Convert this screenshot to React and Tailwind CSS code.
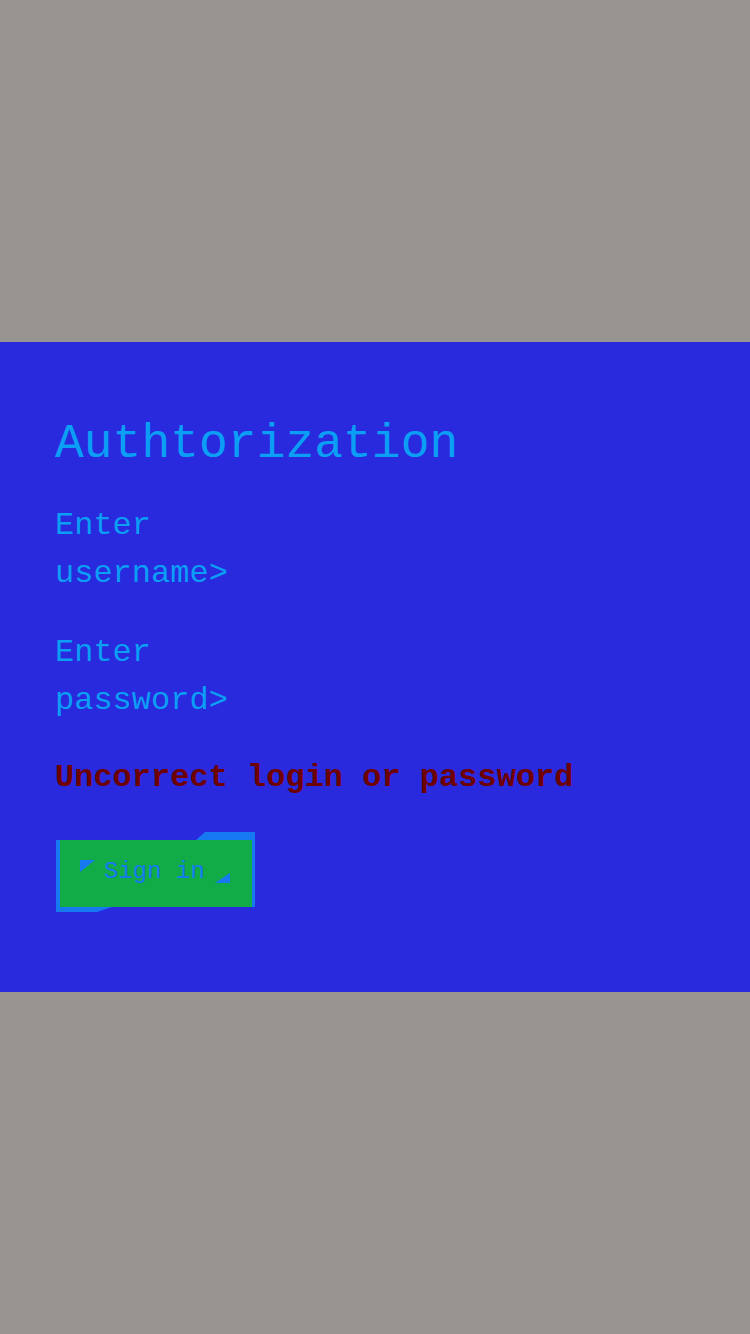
import React from 'react';

const mono = { fontFamily: '"Liberation Mono", "DejaVu Sans Mono", monospace' };

const SignInButton = () => (
  <div role="button" className="relative w-[199px] h-[80px] cursor-pointer">
    <svg className="absolute inset-0" width="199" height="80" viewBox="0 0 199 80">
      <polygon points="140,8 149,0 199,0 199,75 140,75" fill="#1679f2" />
      <polygon points="0,8 4,8 4,75 56,75 41,80 0,80" fill="#1679f2" />
      <rect x="4" y="8" width="192" height="67" fill="#11ab47" />
      <polygon points="24,28 39,28 24,40" fill="#1679f2" />
      <polygon points="174,41 174,51 159,51" fill="#1679f2" />
    </svg>
    <span className="relative block pl-[48px] pt-[28px] text-[24px] leading-none text-[#1679f2]">
      Sign in
    </span>
  </div>
);

export default function App() {
  return (
    <div className="min-h-[1334px] bg-[#989492] flex flex-col justify-center" style={mono}>
      <section className="h-[650px] bg-[#292ade] pl-[55px] pt-[78px]">
        <h1 className="text-[48px] leading-none text-[#0b9ef5]">Authtorization</h1>
        <div className="mt-[34px] flex flex-col gap-[31px] text-[32px] leading-[48px] text-[#0b9ef5]">
          <label className="block">
            <div>Enter</div>
            <div>username&gt;</div>
          </label>
          <label className="block">
            <div>Enter</div>
            <div>password&gt;</div>
          </label>
        </div>
        <p className="mt-[29px] text-[32px] leading-[48px] font-bold text-[#6e0000]">
          Uncorrect login or password
        </p>
        <div className="mt-[30px] ml-px">
          <SignInButton />
        </div>
      </section>
    </div>
  );
}
